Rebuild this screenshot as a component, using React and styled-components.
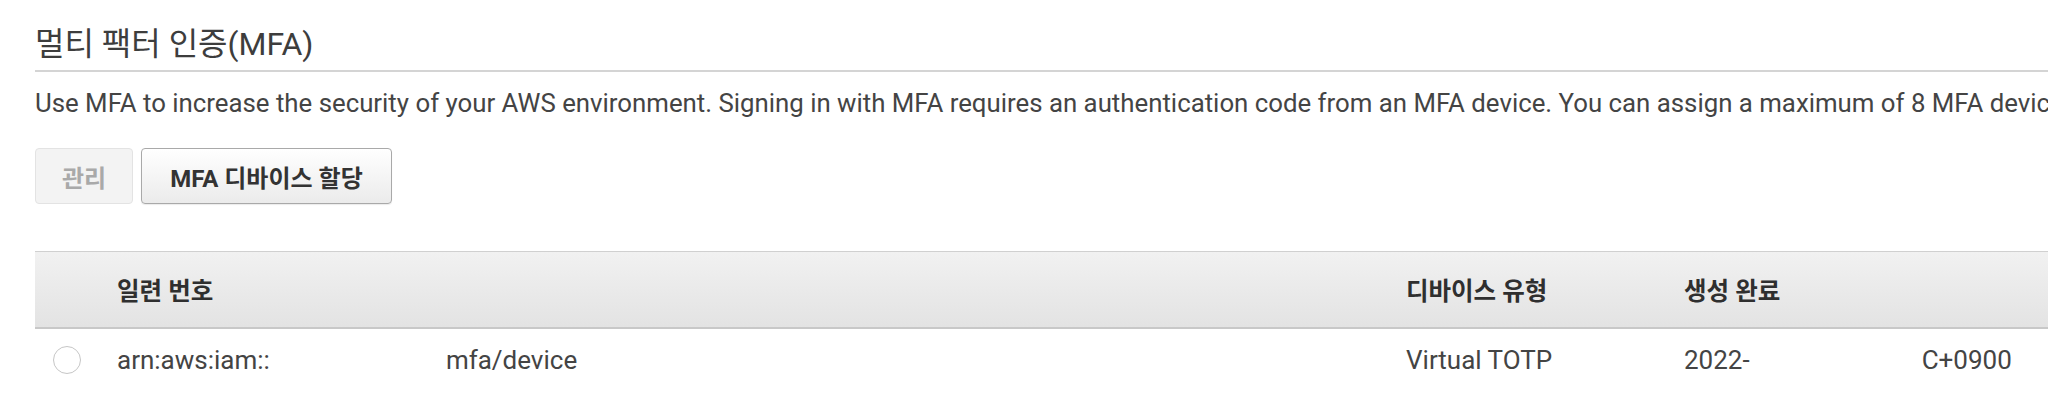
import React from "react";
import styled, { createGlobalStyle } from "styled-components";

const Global = createGlobalStyle`
  html, body { margin: 0; padding: 0; background: #fff; }
  body { font-family: Roboto, "Noto Sans CJK KR", sans-serif; color: #444; overflow: hidden; }
`;

const Page = styled.div`
  width: 2048px;
  height: 407px;
  padding-left: 35px;
  box-sizing: border-box;
  overflow: hidden;
  display: flex;
  flex-direction: column;
`;

const Title = styled.h2`
  margin: 25px 0 0;
  padding-bottom: 7px;
  border-bottom: 2px solid #d4d4d4;
  font-size: 32px;
  line-height: 38px;
  font-weight: 400;
  color: #3d3d3d;
  white-space: nowrap;
`;

const Description = styled.p`
  margin: 16px 0 0;
  font-size: 25.8px;
  line-height: 30px;
  color: #444;
  white-space: nowrap;
`;

const Toolbar = styled.div`
  display: flex;
  gap: 8px;
  margin-top: 30px;
`;

const Button = styled.button`
  height: 56px;
  padding: 0 ${(p) => (p.$disabled ? "26px" : "28px")};
  border-radius: 4px;
  font-family: Roboto, "Noto Sans CJK KR", sans-serif;
  font-size: 24px;
  font-weight: 700;
  cursor: ${(p) => (p.$disabled ? "default" : "pointer")};
  color: ${(p) => (p.$disabled ? "#a9a9a9" : "#333")};
  border: 1px solid ${(p) => (p.$disabled ? "#e3e3e3" : "#a9a9a9")};
  background: ${(p) =>
    p.$disabled ? "#f3f3f3" : "linear-gradient(#ffffff, #ebebeb)"};
  box-shadow: ${(p) => (p.$disabled ? "none" : "0 1px 1px rgba(0,0,0,0.08)")};
`;

const Table = styled.div`
  margin-top: 47px;
  width: 2100px;
`;

const grid = `
  display: grid;
  grid-template-columns: 82px 1289px 278px 1fr;
  align-items: center;
`;

const HeaderRow = styled.div`
  ${grid}
  height: 75px;
  border-top: 1px solid #d0d0d0;
  border-bottom: 2px solid #c8c8c8;
  background: linear-gradient(#f1f1f1, #e3e3e3);
`;

const HeaderCell = styled.div`
  font-size: 24.5px;
  font-weight: 700;
  color: #2f2f2f;
  white-space: nowrap;
`;

const BodyRow = styled.div`
  ${grid}
  height: 62px;
`;

const Cell = styled.div`
  font-size: 26px;
  color: #444;
  white-space: nowrap;
  display: flex;
  align-items: center;
`;

const RadioCell = styled.div`
  display: flex;
  justify-content: flex-start;
  padding-left: 18px;
`;

const Radio = styled.span`
  width: 26px;
  height: 26px;
  border-radius: 50%;
  border: 1.5px solid #c6c6c6;
  background: #fff;
  display: inline-block;
`;

const Redacted = styled.span`
  display: inline-block;
  width: ${(p) => p.$w}px;
`;

export default function App() {
  return (
    <>
      <Global />
      <Page>
        <Title>멀티 팩터 인증(MFA)</Title>
        <Description>
          Use MFA to increase the security of your AWS environment. Signing in with MFA requires an authentication code from an MFA device. You can assign a maximum of 8 MFA devices.
        </Description>
        <Toolbar>
          <Button $disabled>관리</Button>
          <Button>MFA 디바이스 할당</Button>
        </Toolbar>
        <Table>
          <HeaderRow>
            <div />
            <HeaderCell>일련 번호</HeaderCell>
            <HeaderCell>디바이스 유형</HeaderCell>
            <HeaderCell>생성 완료</HeaderCell>
          </HeaderRow>
          <BodyRow>
            <RadioCell>
              <Radio />
            </RadioCell>
            <Cell>
              arn:aws:iam::
              <Redacted $w={176} />
              mfa/device
            </Cell>
            <Cell>Virtual TOTP</Cell>
            <Cell>
              2022-
              <Redacted $w={172} />
              C+0900
            </Cell>
          </BodyRow>
        </Table>
      </Page>
    </>
  );
}
